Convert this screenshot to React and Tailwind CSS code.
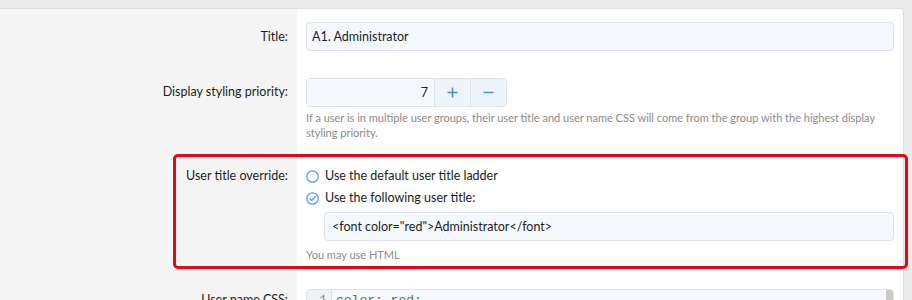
import React from "react";

const font = { fontFamily: 'Lato, "Noto Sans", Arial, sans-serif' };

function Row({ label, labelClass = "leading-[28px] pt-[14px]", children, className = "" }) {
  return (
    <div className={"grid grid-cols-[297px_1fr] " + className}>
      <div className={"bg-[#f5f5f5] text-right pr-[9px] text-[12.5px] text-[#1d1d1d] " + labelClass}>{label}</div>
      <div className="pl-[9px] pr-[9px]">{children}</div>
    </div>
  );
}

function RadioEmpty() {
  return (
    <svg width="13" height="13" viewBox="0 0 13 13" className="shrink-0">
      <circle cx="6.5" cy="6.5" r="5.7" fill="none" stroke="#5a9fd8" strokeWidth="1.3" />
    </svg>
  );
}

function RadioChecked() {
  return (
    <svg width="13" height="13" viewBox="0 0 13 13" className="shrink-0">
      <circle cx="6.5" cy="6.5" r="5.7" fill="none" stroke="#5a9fd8" strokeWidth="1.3" />
      <path d="M3.9 6.7 L5.8 8.5 L9.2 4.7" fill="none" stroke="#5a9fd8" strokeWidth="1.3" strokeLinecap="round" strokeLinejoin="round" />
    </svg>
  );
}

export default function App() {
  return (
    <div className="w-[912px] h-[300px] overflow-hidden bg-[#ebebeb] pt-[8px] pr-[8px]" style={font}>
      <div className="bg-[#fefefe] border-t border-r border-[#dedede] rounded-tr-[3px] h-[300px]">
        <Row label="Title:">
          <div className="pt-[13px] pb-[13px]">
            <div className="h-[29px] rounded-[4px] border border-[#dfe4ea] bg-[#f5f9fd] px-[5px] text-[12.5px] leading-[27px] text-[#1d1d1d]">
              A1. Administrator
            </div>
          </div>
        </Row>
        <Row label="Display styling priority:">
          <div className="pt-[14px] pb-[13px]">
            <div className="flex h-[29px] w-[201px] rounded-[4px] border border-[#dfe4ea] overflow-hidden">
              <div className="flex-1 bg-[#f5f9fd] text-right pr-[6px] text-[12.5px] leading-[27px] text-[#1d1d1d]">7</div>
              <div className="w-[36px] bg-[#edf4fc] border-l border-[#dfe4ea] flex items-center justify-center">
                <svg width="11" height="11" viewBox="0 0 11 11"><path d="M5.5 0.5V10.5M0.5 5.5H10.5" stroke="#4a8fd6" strokeWidth="1.6" /></svg>
              </div>
              <div className="w-[36px] bg-[#edf4fc] border-l border-[#dfe4ea] flex items-center justify-center">
                <svg width="11" height="11" viewBox="0 0 11 11"><path d="M0.5 5.5H10.5" stroke="#4a8fd6" strokeWidth="1.6" /></svg>
              </div>
            </div>
            <div className="mt-[3px] text-[11px] leading-[15px] text-[#8c8c8c] pr-[10px]">
              If a user is in multiple user groups, their user title and user name CSS will come from the group with the highest display styling priority.
            </div>
          </div>
        </Row>
        <div className="relative">
          <Row label="User title override:" labelClass="leading-[20px] pt-[13px]">
            <div className="pt-[13px] pb-[13px] text-[12.5px] text-[#1d1d1d]">
              <div className="flex items-center gap-[6px] h-[20px]">
                <RadioEmpty />
                <span>Use the default user title ladder</span>
              </div>
              <div className="flex items-center gap-[6px] h-[20px] mt-[2px]">
                <RadioChecked />
                <span>Use the following user title:</span>
              </div>
              <div className="pl-[18px] mt-[4px]">
                <div className="h-[29px] rounded-[4px] border border-[#dfe4ea] bg-[#f5f9fd] px-[7px] leading-[27px]">
                  &lt;font color="red"&gt;Administrator&lt;/font&gt;
                </div>
              </div>
              <div className="mt-[6px] text-[11px] leading-[15px] text-[#8c8c8c]">You may use HTML</div>
            </div>
          </Row>
          <div className="absolute left-[173px] top-[1px] w-[735px] h-[115px] border-[3.5px] border-[#e00a14] rounded-[5px] pointer-events-none" />
        </div>
        <Row label="User name CSS:" labelClass="leading-[28px] pt-[11px]">
          <div className="pt-[14px]">
            <div className="flex h-[60px] rounded-[4px] border border-[#dfe4ea] bg-[#f5f9fd] overflow-hidden">
              <div className="w-[25px] bg-[#f0f3f6] border-r border-[#dfe4ea] text-right pr-[4px] text-[13px] leading-[22px] text-[#8c8c8c]" style={{ fontFamily: '"Liberation Mono", monospace' }}>1</div>
              <div className="flex-1 pl-[4px] text-[13px] leading-[22px] text-[#2a8a3a]" style={{ fontFamily: '"Liberation Mono", monospace' }}>color: red;</div>
              <div className="w-[7px] bg-[#c9c9c9] mr-[0px]" />
            </div>
          </div>
        </Row>
      </div>
    </div>
  );
}
